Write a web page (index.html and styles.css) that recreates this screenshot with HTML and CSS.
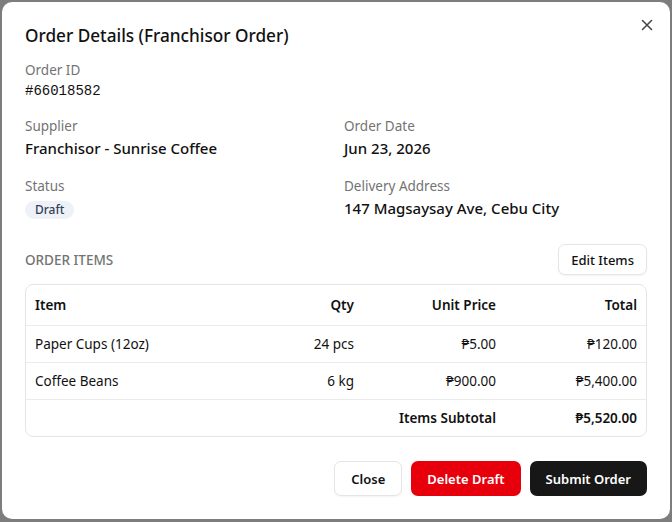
FILE: index.html
```html
<!DOCTYPE html>
<html lang="en">
<head>
<meta charset="utf-8">
<title>Order Details</title>
<link rel="stylesheet" href="styles.css">
</head>
<body>
<div class="backdrop">
  <section class="dialog" role="dialog" aria-labelledby="dlg-title">
    <button class="dialog-close" aria-label="Close">
      <svg width="12" height="12" viewBox="0 0 12 12" fill="none" stroke="currentColor" stroke-width="1.5" stroke-linecap="round"><path d="M1.5 1.5l9 9M10.5 1.5l-9 9"/></svg>
    </button>
    <h2 id="dlg-title" class="dialog-title">Order Details (Franchisor Order)</h2>

    <div class="field field-id">
      <div class="field-label">Order ID</div>
      <div class="field-mono">#66018582</div>
    </div>

    <div class="info-grid">
      <div class="field">
        <div class="field-label">Supplier</div>
        <div class="field-value">Franchisor - Sunrise Coffee</div>
      </div>
      <div class="field">
        <div class="field-label">Order Date</div>
        <div class="field-value">Jun 23, 2026</div>
      </div>
      <div class="field">
        <div class="field-label">Status</div>
        <span class="badge">Draft</span>
      </div>
      <div class="field">
        <div class="field-label">Delivery Address</div>
        <div class="field-value">147 Magsaysay Ave, Cebu City</div>
      </div>
    </div>

    <div class="items-head">
      <span class="section-label">ORDER ITEMS</span>
      <button class="btn btn-outline btn-sm">Edit Items</button>
    </div>

    <div class="table-wrap">
      <table class="items">
        <colgroup>
          <col class="c-item"><col class="c-qty"><col class="c-price"><col class="c-total">
        </colgroup>
        <thead>
          <tr><th class="left">Item</th><th>Qty</th><th>Unit Price</th><th>Total</th></tr>
        </thead>
        <tbody>
          <tr><td class="left">Paper Cups (12oz)</td><td>24 pcs</td><td>₱5.00</td><td>₱120.00</td></tr>
          <tr><td class="left">Coffee Beans</td><td>6 kg</td><td>₱900.00</td><td>₱5,400.00</td></tr>
        </tbody>
        <tfoot>
          <tr><td></td><td></td><td class="strong">Items Subtotal</td><td class="strong">₱5,520.00</td></tr>
        </tfoot>
      </table>
    </div>

    <div class="actions">
      <button class="btn btn-outline btn-close">Close</button>
      <button class="btn btn-danger">Delete Draft</button>
      <button class="btn btn-dark">Submit Order</button>
    </div>
  </section>
</div>
</body>
</html>
```

FILE: styles.css
```css
* { box-sizing: border-box; }

html, body {
  margin: 0;
  height: 100%;
}

body {
  background: #7d7d7d;
  font-family: "Noto Sans", "Open Sans", sans-serif;
  color: #111;
}

.backdrop {
  padding: 2px;
  height: 100%;
}

.dialog {
  position: relative;
  background: #fff;
  border-radius: 10px;
  height: 517px;
  padding: 22px 23px 23px;
}

.dialog-close {
  position: absolute;
  top: 13px;
  right: 13px;
  width: 20px;
  height: 20px;
  border: 0;
  padding: 0;
  background: none;
  color: #444;
  display: flex;
  align-items: center;
  justify-content: center;
}

.dialog-title {
  margin: 0;
  font-size: 17.2px;
  line-height: 24px;
  font-weight: 500;
}

.field { display: flex; flex-direction: column; align-items: flex-start; }
.field-id { margin-top: 13px; }

.field-label {
  font-size: 13.5px;
  line-height: 18px;
  color: #737373;
}

.field-mono {
  margin-top: 2px;
  font-family: "Liberation Mono", monospace;
  font-size: 14px;
  line-height: 20px;
}

.field-value {
  margin-top: 2px;
  font-size: 15px;
  line-height: 22px;
  font-weight: 500;
}

.info-grid {
  margin-top: 16px;
  display: grid;
  grid-template-columns: 1fr 1fr;
  column-gap: 16px;
  row-gap: 18px;
}

.badge {
  margin-top: 6px;
  display: inline-block;
  background: #eef2f8;
  color: #334155;
  font-size: 12px;
  line-height: 18px;
  padding: 0 10px;
  border-radius: 9px;
  font-weight: 500;
}

.items-head {
  margin-top: 25px;
  display: flex;
  align-items: center;
  justify-content: space-between;
}

.section-label {
  font-size: 13.5px;
  color: #737373;
  font-weight: 500;
}

.btn {
  font-family: inherit;
  font-size: 13px;
  font-weight: 600;
  height: 35px;
  border-radius: 7px;
  padding: 0 15px;
  border: 1px solid transparent;
  cursor: pointer;
}

.btn-sm { height: 31px; padding: 0 12px; font-weight: 500; }
.btn-close { width: 68px; padding: 0; }

.btn-outline {
  background: #fff;
  border-color: #e5e5e5;
  color: #111;
  box-shadow: 0 1px 2px rgba(0,0,0,0.05);
}

.btn-danger { background: #e7000b; color: #fff; }
.btn-dark { background: #171717; color: #fff; }

.table-wrap {
  margin-top: 9px;
  border: 1px solid #e5e5e5;
  border-radius: 8px;
  overflow: hidden;
}

.items {
  width: 100%;
  border-collapse: collapse;
  table-layout: fixed;
  font-size: 13.5px;
}

.c-item { width: 196px; }
.c-qty { width: 141px; }
.c-price { width: 142px; }

.items th, .items td {
  text-align: right;
  padding: 0 9px;
  white-space: nowrap;
}

.items th {
  height: 40px;
  font-weight: 600;
}

.items td { height: 37px; }

.items .left { text-align: left; }

.items tbody tr, .items tfoot tr { border-top: 1px solid #ebebeb; }

.items .strong { font-weight: 600; }

.actions {
  margin-top: 24px;
  display: flex;
  justify-content: flex-end;
  gap: 9px;
}
```
